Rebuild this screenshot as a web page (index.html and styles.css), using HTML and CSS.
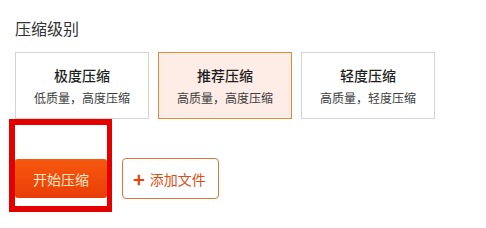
FILE: index.html
```html
<!DOCTYPE html>
<html lang="zh-CN">
<head>
    <meta charset="UTF-8">
    <meta name="viewport" content="width=device-width, initial-scale=1.0">
    <title>压缩级别</title>
    <link rel="stylesheet" href="styles.css">
</head>
<body>
    <div class="panel">
        <div class="section-title">压缩级别</div>

        <div class="levels">
            <div class="level">
                <div class="level-name">极度压缩</div>
                <div class="level-desc">低质量，高度压缩</div>
            </div>
            <div class="level active">
                <div class="level-name">推荐压缩</div>
                <div class="level-desc">高质量，高度压缩</div>
            </div>
            <div class="level">
                <div class="level-name">轻度压缩</div>
                <div class="level-desc">高质量，轻度压缩</div>
            </div>
        </div>

        <div class="actions">
            <div class="start-wrap">
                <button class="btn-start">开始压缩</button>
            </div>
            <button class="btn-add"><span class="plus">+</span>添加文件</button>
        </div>
    </div>
</body>
</html>
```

FILE: styles.css
```css
body {
    margin: 0;
    padding: 0;
    background-color: #ffffff;
    font-family: "Noto Sans CJK SC", "Noto Sans", sans-serif;
    color: #333333;
}
.panel {
    padding: 18px 15px 16px 15px;
}
.section-title {
    font-size: 16px;
    line-height: 20px;
    color: #333333;
}
.levels {
    display: flex;
    gap: 9px;
    margin-top: 14px;
}
.level {
    width: 134px;
    height: 67px;
    box-sizing: border-box;
    border: 1px solid #d4d4d4;
    background-color: #ffffff;
    text-align: center;
    padding-top: 12px;
}
.level.active {
    border-color: #e48a3c;
    background-color: #fdede6;
}
.level-name {
    font-size: 14px;
    line-height: 20px;
    color: #1e1e1e;
    font-weight: 500;
}
.level-desc {
    font-size: 12px;
    line-height: 18px;
    margin-top: 4px;
    color: #3c3c3c;
}
.actions {
    display: flex;
    align-items: flex-start;
    gap: 10px;
    margin-left: -6px;
}
/* red annotation frame around the start button */
.start-wrap {
    display: flex;
    border: 6px solid #e50000;
    border-right-width: 5px;
    padding: 34px 0 8px 0;
}
.btn-start {
    width: 92px;
    height: 39px;
    border: none;
    border-radius: 3px;
    background: linear-gradient(#f7590f, #e83d06);
    color: #ffe6c4;
    font-family: inherit;
    font-size: 14px;
    padding: 0;
}
.btn-add {
    height: 41px;
    margin-top: 39px;
    padding: 0 12px 0 10px;
    border: 1px solid #d9773a;
    border-radius: 4px;
    background-color: #ffffff;
    color: #e14b14;
    font-family: inherit;
    font-size: 14px;
    display: flex;
    align-items: center;
}
.plus {
    font-size: 20px;
    font-weight: bold;
    color: #e8420a;
    margin-right: 5px;
    line-height: 1;
}
```
